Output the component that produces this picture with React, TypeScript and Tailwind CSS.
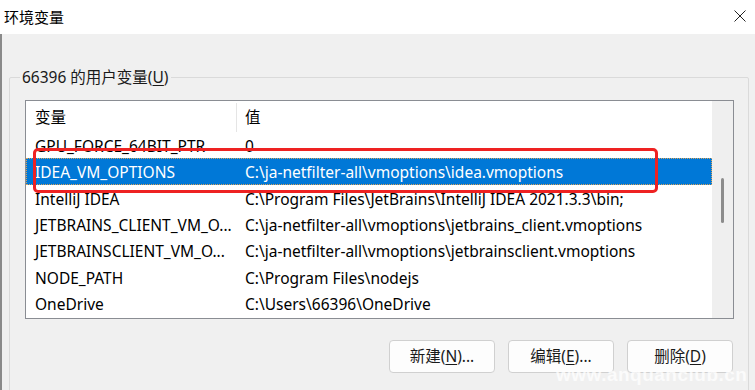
import React from "react";

const rows = [
  { name: "GPU_FORCE_64BIT_PTR", value: "0" },
  { name: "IDEA_VM_OPTIONS", value: "C:\\ja-netfilter-all\\vmoptions\\idea.vmoptions", selected: true },
  { name: "IntelliJ IDEA", value: "C:\\Program Files\\JetBrains\\IntelliJ IDEA 2021.3.3\\bin;" },
  { name: "JETBRAINS_CLIENT_VM_O...", value: "C:\\ja-netfilter-all\\vmoptions\\jetbrains_client.vmoptions" },
  { name: "JETBRAINSCLIENT_VM_O...", value: "C:\\ja-netfilter-all\\vmoptions\\jetbrainsclient.vmoptions" },
  { name: "NODE_PATH", value: "C:\\Program Files\\nodejs" },
  { name: "OneDrive", value: "C:\\Users\\66396\\OneDrive" },
];

// button with an underlined access key
const DlgButton = ({ label, hotkey, tail }: { label: string; hotkey: string; tail: string }) => (
  <button className="w-[106px] h-[33px] rounded-[4px] border border-[#d0d0d0] bg-[#fdfdfd] text-[15.5px] text-[#1a1a1a] flex items-center justify-center pt-[1px]">
    {label}(<span className="underline underline-offset-2">{hotkey}</span>){tail}
  </button>
);

export default function App() {
  return (
    <div className="relative w-[755px] h-[390px] overflow-hidden bg-[#f0f0f0] font-['Noto_Sans','Noto_Sans_CJK_SC',sans-serif] text-black">
      {/* Title bar */}
      <div className="h-[34px] bg-white flex items-center justify-between pl-[4px] pr-[9px]">
        <span className="text-[15px]">环境变量</span>
        <svg width="12" height="12" viewBox="0 0 12 12" className="mt-[-2px]">
          <path d="M0.5 0.5 L11.5 11.5 M11.5 0.5 L0.5 11.5" stroke="#222" strokeWidth="1" />
        </svg>
      </div>

      {/* Body */}
      <div className="h-[356px] border-l-2 border-[#8a8a8a] pl-[7px] pr-[6px] pt-[43px]">
        <div className="relative h-[340px] border border-[#dadada] rounded-[2px] pl-[15px] pr-[14px] pt-[22px]">
          <span className="absolute left-[10px] top-[-12px] px-[2px] bg-[#f0f0f0] text-[15.5px] leading-[22px] text-[#1a1a1a]">
            66396 的用户变量(<span className="underline underline-offset-2">U</span>)
          </span>

          {/* List view */}
          <div className="h-[219px] border border-[#8a8d93] bg-white flex">
            <div className="flex-1 flex flex-col min-w-0">
              <div className="h-[31px] shrink-0 flex items-center text-[15.5px] pt-[2px]">
                <div className="w-[211px] h-full pl-[9px] flex items-center border-r border-[#e5e5e5]">变量</div>
                <div className="pl-[8px]">值</div>
              </div>
              {rows.map((r) => (
                <div
                  key={r.name}
                  className={`h-[26.3px] shrink-0 flex items-center pt-[3px] text-[15.5px] whitespace-nowrap ${
                    r.selected ? "bg-[#0078d7] text-white outline-1 outline-dotted outline-[#d9a35a] -outline-offset-1" : ""
                  }`}
                >
                  <div className="w-[211px] shrink-0 pl-[9px] overflow-hidden">{r.name}</div>
                  <div className="pl-[8px]">{r.value}</div>
                </div>
              ))}
            </div>
            {/* Scrollbar */}
            <div className="w-[21px] shrink-0 bg-[#efefef] flex justify-center pt-[77px]">
              <div className="w-[3px] h-[45px] rounded-full bg-[#8c8c8c]" />
            </div>
          </div>

          {/* Buttons */}
          <div className="flex justify-end gap-[13px] mt-[21px] pr-[1px]">
            <DlgButton label="新建" hotkey="N" tail="..." />
            <DlgButton label="编辑" hotkey="E" tail="..." />
            <DlgButton label="删除" hotkey="D" tail="" />
          </div>
        </div>
      </div>

      {/* Red highlight annotation */}
      <div className="absolute left-[33px] top-[148px] w-[625px] h-[45px] border-[3px] border-[#ee2222] rounded-[5px]" />

      {/* Watermark */}
      <div className="absolute left-[556px] top-[361px] text-[19px] font-bold tracking-[0.5px] text-white/75 font-['Liberation_Sans',sans-serif]">
        www.anquanclub.cn
      </div>
    </div>
  );
}
